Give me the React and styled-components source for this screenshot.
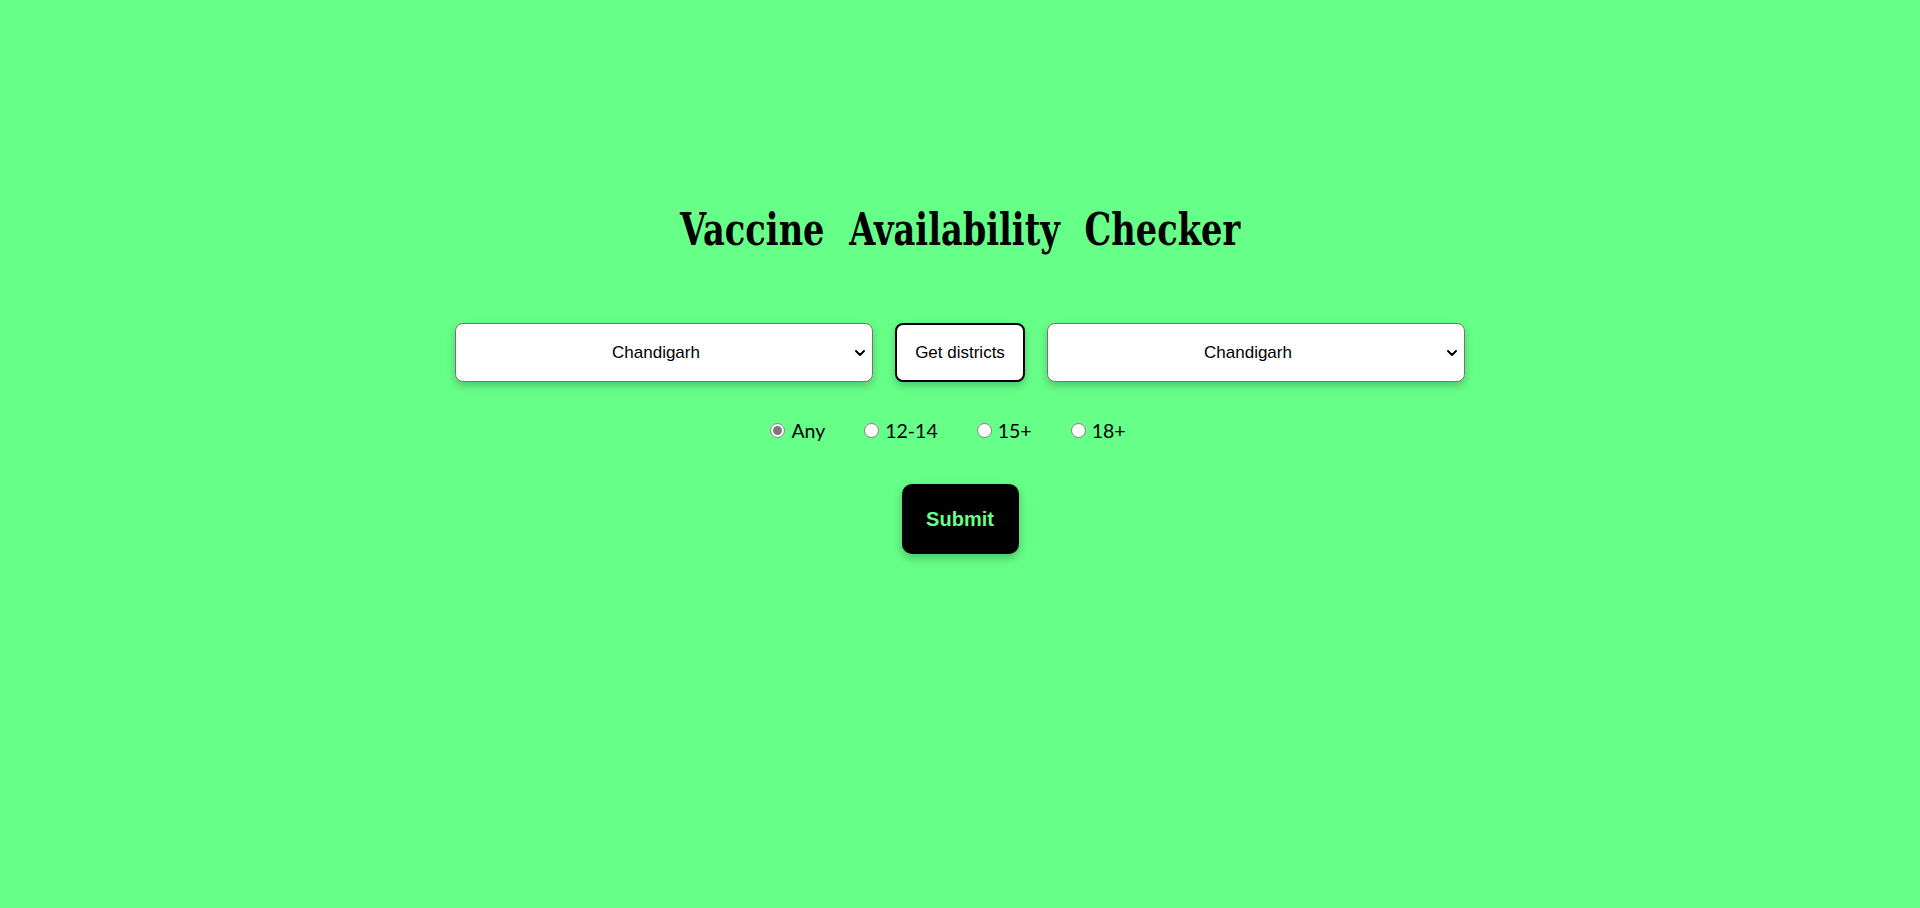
import React, { useState } from "react";
import styled, { createGlobalStyle } from "styled-components";

const Global = createGlobalStyle`
  html, body { margin: 0; padding: 0; background: #66ff88; }
  body { font-family: "Liberation Sans", Arial, sans-serif; }
`;

const Page = styled.main`
  min-height: 100vh;
  background: #66ff88;
  display: flex;
  flex-direction: column;
  align-items: center;
  padding-top: 200px;
  box-sizing: border-box;
`;

const Title = styled.h1`
  margin: 0;
  font-family: "DejaVu Serif", serif;
  font-weight: 700;
  font-size: 44px;
  line-height: 60px;
  word-spacing: 17px;
  color: #000;
  transform: scaleX(0.765);
`;

const Controls = styled.div`
  display: flex;
  align-items: center;
  gap: 22px;
  margin-top: 63px;
`;

const SelectWrap = styled.div`
  position: relative;
  width: 418px;
  height: 59px;
`;

const Select = styled.select`
  appearance: none;
  width: 100%;
  height: 100%;
  box-sizing: border-box;
  background: #fff;
  border: 1px solid #767676;
  border-radius: 8px;
  box-shadow: 0 4px 8px rgba(0, 0, 0, 0.22);
  font-family: "Liberation Sans", Arial, sans-serif;
  font-size: 17px;
  color: #000;
  text-align: center;
  text-align-last: center;
  padding: 0 32px 0 16px;
  outline: none;
`;

const Chevron = styled.svg`
  position: absolute;
  right: 7px;
  top: 50%;
  width: 12px;
  height: 12px;
  margin-top: -6px;
  pointer-events: none;
`;

const DistrictButton = styled.button`
  width: 130px;
  height: 59px;
  box-sizing: border-box;
  background: #fff;
  border: 2px solid #000;
  border-radius: 8px;
  box-shadow: 0 4px 8px rgba(0, 0, 0, 0.22);
  font-family: "Liberation Sans", Arial, sans-serif;
  font-size: 17px;
  color: #000;
  cursor: pointer;
  padding: 0;
`;

const RadioRow = styled.div`
  display: flex;
  align-items: center;
  gap: 39px;
  margin-top: 36px;
  padding-right: 24px;
  height: 24px;
`;

const RadioLabel = styled.label`
  display: flex;
  align-items: center;
  font-family: "Lato", "Open Sans", sans-serif;
  font-size: 19.5px;
  color: #000;
  cursor: pointer;
`;

const Radio = styled.input`
  width: 15px;
  height: 15px;
  margin: 0 6px 0 0;
  accent-color: #7a7a7a;
`;

const Submit = styled.button`
  margin-top: 42px;
  width: 117px;
  height: 70px;
  background: #000;
  color: #66ff88;
  border: none;
  border-radius: 10px;
  box-shadow: 0 4px 10px rgba(0, 0, 0, 0.25);
  font-family: "Liberation Sans", Arial, sans-serif;
  font-weight: 700;
  font-size: 20px;
  cursor: pointer;
`;

function StateSelect({ value, onChange }) {
  return (
    <SelectWrap>
      <Select value={value} onChange={onChange}>
        <option>Chandigarh</option>
        <option>Delhi</option>
        <option>Punjab</option>
      </Select>
      <Chevron viewBox="0 0 12 12">
        <path d="M2 4 L6 8 L10 4" fill="none" stroke="#000" strokeWidth="2" strokeLinecap="round" strokeLinejoin="round" />
      </Chevron>
    </SelectWrap>
  );
}

export default function App() {
  const [state, setState] = useState("Chandigarh");
  const [district, setDistrict] = useState("Chandigarh");
  const [age, setAge] = useState("any");
  const ages = [
    { id: "any", label: "Any" },
    { id: "12", label: "12-14" },
    { id: "15", label: "15+" },
    { id: "18", label: "18+" },
  ];
  return (
    <>
      <Global />
      <Page>
        <Title>Vaccine Availability Checker</Title>
        <Controls>
          <StateSelect value={state} onChange={(e) => setState(e.target.value)} />
          <DistrictButton>Get districts</DistrictButton>
          <StateSelect value={district} onChange={(e) => setDistrict(e.target.value)} />
        </Controls>
        <RadioRow>
          {ages.map((a) => (
            <RadioLabel key={a.id}>
              <Radio
                type="radio"
                name="age"
                checked={age === a.id}
                onChange={() => setAge(a.id)}
              />
              {a.label}
            </RadioLabel>
          ))}
        </RadioRow>
        <Submit>Submit</Submit>
      </Page>
    </>
  );
}
